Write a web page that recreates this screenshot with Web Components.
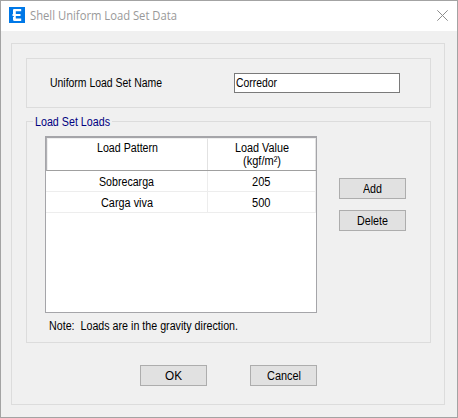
<!DOCTYPE html>
<html lang="en">
<head>
<meta charset="utf-8">
<title>Shell Uniform Load Set Data</title>
<style>
html, body { margin: 0; height: 100%; overflow: hidden; background: #f0f0f0; }
body { font: 12px/14px "Liberation Sans", Arial, sans-serif; color: #000; }
.name-row { display: flex; justify-content: space-between; padding: 14px 30px 0 23px; }
.name-row > fit-text { margin-top: 3px; }
.loads { display: flex; padding: 14px 0 0 18px; }
.side { display: flex; flex-direction: column; gap: 11px; margin: 42px 0 0 22px; }
.note { display: flex; padding: 6px 0 0 22px; }
.actions { display: flex; gap: 43px; padding: 22px 0 0 114px; }
</style>
</head>
<body>
<dialog-window>
  <fit-text slot="title" width="147">Shell Uniform Load Set Data</fit-text>
  <group-box style="height:50px">
    <div class="name-row">
      <fit-text width="112">Uniform Load Set Name</fit-text>
      <text-field><fit-text width="41">Corredor</fit-text></text-field>
    </div>
  </group-box>
  <group-box style="height:222px;margin-top:13px">
    <fit-text slot="legend" width="75">Load Set Loads</fit-text>
    <div class="loads">
      <load-grid>
        <fit-text slot="pattern" width="61">Load Pattern</fit-text>
        <fit-text slot="value" width="54">Load Value</fit-text>
        <fit-text slot="value" width="38" style="margin-top:-1px">(kgf/m²)</fit-text>
        <load-row>
          <fit-text slot="name" width="55">Sobrecarga</fit-text>
          <fit-text slot="load" width="18.5">205</fit-text>
        </load-row>
        <load-row>
          <fit-text slot="name" width="52">Carga viva</fit-text>
          <fit-text slot="load" width="18.5">500</fit-text>
        </load-row>
      </load-grid>
      <div class="side">
        <push-button><fit-text width="19">Add</fit-text></push-button>
        <push-button><fit-text width="31">Delete</fit-text></push-button>
      </div>
    </div>
    <div class="note"><fit-text width="189">Note:&nbsp; Loads are in the gravity direction.</fit-text></div>
  </group-box>
  <div class="actions">
    <push-button><fit-text width="17">OK</fit-text></push-button>
    <push-button><fit-text width="34">Cancel</fit-text></push-button>
  </div>
</dialog-window>
<script>
const define = (name, html, setup) => customElements.define(name, class extends HTMLElement {
  constructor() {
    super();
    this.attachShadow({ mode: "open" }).innerHTML = html;
  }
  connectedCallback() { if (setup) setup(this); }
});

define("push-button", `
<style>
:host { display: flex; box-sizing: border-box; width: 67px; height: 21px; padding-top: 3px;
  justify-content: center; border: 1px solid #adadad; background: #e1e1e1; }
</style><slot></slot>`);

define("text-field", `
<style>
:host { display: block; box-sizing: border-box; width: 166px; height: 20px; padding: 2px 0 0 1px;
  border: 1px solid #7a7a7a; background: #fff; }
</style><slot></slot>`);

define("group-box", `
<style>
:host { display: block; box-sizing: border-box; border: 1px solid #dcdcdc; }
.legend { display: flex; height: 0; }
::slotted([slot=legend]) { margin-top: -7px; padding: 0 2px 0 2px; margin-left: 6px;
  background: #f0f0f0; color: #000080; }
</style><div class="legend"><slot name="legend"></slot></div><slot></slot>`);

define("load-row", `
<style>
:host { display: grid; grid-template-columns: 162px 1fr; height: 21px; }
div { display: flex; justify-content: center; padding-top: 4px; box-sizing: border-box;
  border-right: 1px solid #ededed; border-bottom: 1px solid #ededed; }
</style><div><slot name="name"></slot></div><div><slot name="load"></slot></div>`);

define("load-grid", `
<style>
:host { display: block; box-sizing: border-box; width: 272px; height: 177px; flex: none;
  border: 1px solid #a5a5a9; border-top-width: 2px; background: #fff; }
.head { display: grid; grid-template-columns: 161px 1fr; height: 33px; box-sizing: border-box;
  border-bottom: 1px solid #a0a0a0; border-left: 1px solid #b0b0b4; }
.head > div { display: flex; flex-direction: column; align-items: center; padding-top: 2px;
  border-top: 1px solid #efefef; border-right: 1px solid #e2e2e2; }
.head > div:first-child { border-left: 1px solid #efefef; }
</style>
<div class="head"><div><slot name="pattern"></slot></div><div><slot name="value"></slot></div></div>
<slot></slot>`);

define("dialog-window", `
<style>
:host { display: flex; flex-direction: column; box-sizing: border-box; width: 458px; height: 418px;
  border: 1px solid #a3a3a3; background: #f0f0f0; }
header { display: flex; flex: none; height: 30px; background: #fff; color: #999;
  font: 12px/14px "Open Sans", "Noto Sans", sans-serif; }
.logo { width: 16px; height: 16px; margin: 6px 5px 0 8px; }
.close { width: 11px; height: 11px; margin: 9px 9px 0 auto; }
::slotted([slot=title]) { margin-top: 8px; }
main { box-sizing: border-box; width: 434px; height: 362px; margin: 12px 0 0 10px;
  padding: 14px 13px 0 14px; border: 1px solid #dcdcdc; }
</style>
<header>
  <svg class="logo" viewBox="0 0 16 16"><path fill="#0078e7" d="M0 0h16v16H0z"/><path fill="#fff" d="M5 2h7.200v2.300H6.800v2.600H11.500v2.200H6.800v2.500h5.400V14H5.500Q4 14 4 12.500V9.800H5V9.100H3.500V6.900H4V3Q4 2 5 2z"/></svg>
  <slot name="title"></slot>
  <svg class="close" viewBox="0 0 11 11"><path fill="none" stroke="#8c8c8c" d="M.3.3 10.700 10.700M10.700.3.3 10.700"/></svg>
</header>
<main><slot></slot></main>`);

// A single line of text scaled to a given width; defined last, so that it
// measures with the font its container sets.
define("fit-text", `
<style>
:host { display: block; height: 14px; flex: none; white-space: nowrap; }
span { display: inline-block; transform-origin: 0 0; }
</style><span><slot></slot></span>`, el => {
  const width = parseFloat(el.getAttribute("width"));
  const span = el.shadowRoot.querySelector("span");
  el.style.width = width + "px";
  span.style.transform = `scaleX(${width / span.getBoundingClientRect().width})`;
});
</script>
</body>
</html>
